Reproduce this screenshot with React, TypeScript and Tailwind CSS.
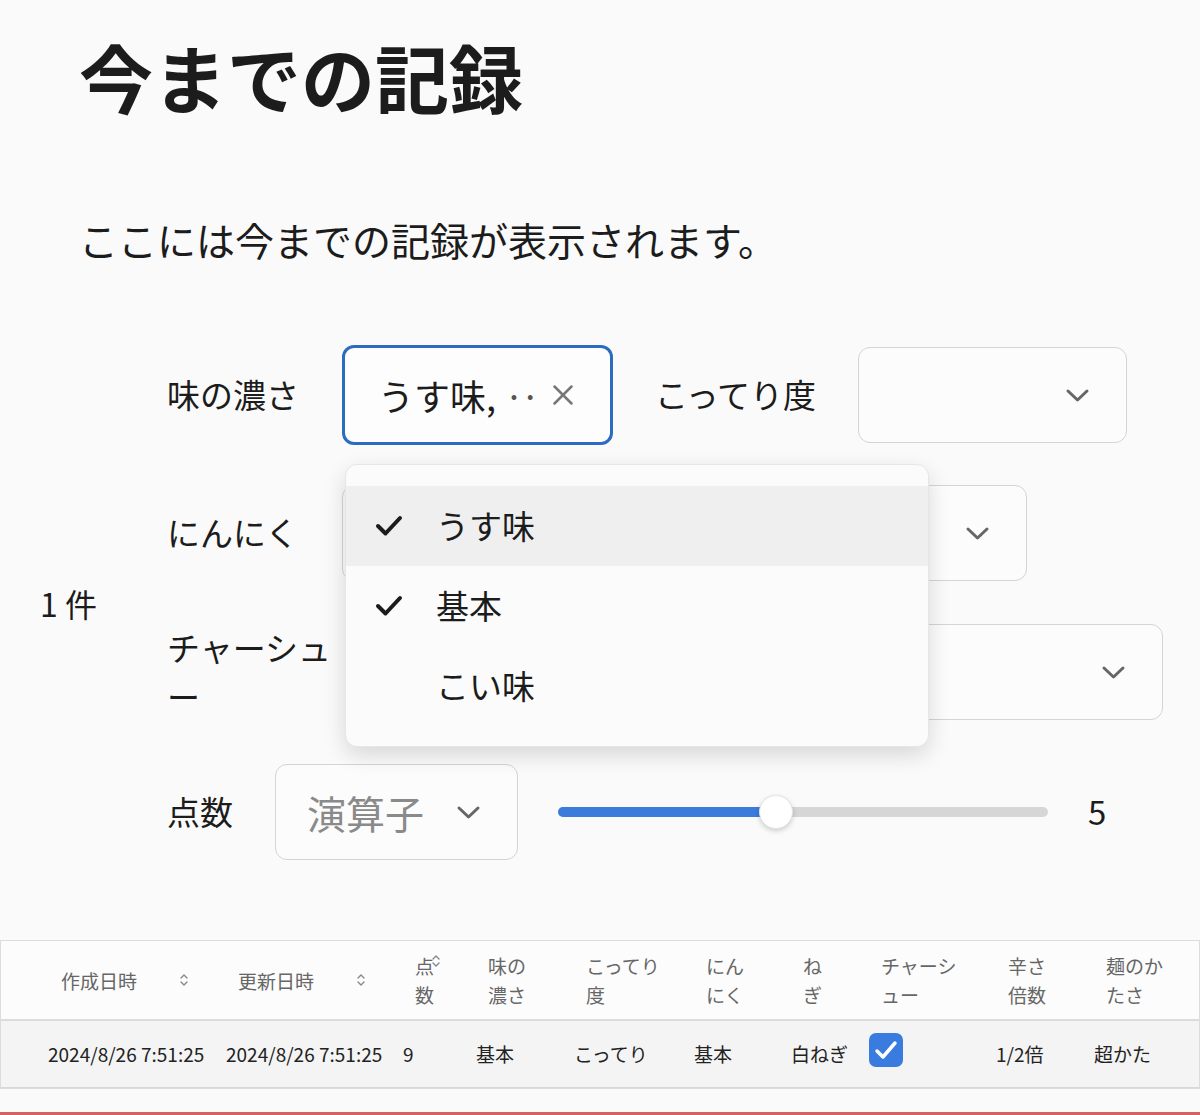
import { X } from 'lucide-react';

const Chevron = ({ className = '' }: { className?: string }) => (
  <svg width="25" height="15" viewBox="0 0 25 15" className={className}>
    <polyline points="3,3 12.5,12 22,3" fill="none" stroke="#666" strokeWidth="3" strokeLinecap="round" strokeLinejoin="round" />
  </svg>
);

const Check = () => (
  <svg width="28" height="22" viewBox="0 0 28 22">
    <polyline points="3,11 10.5,18.5 25,3" fill="none" stroke="#1c1c1c" strokeWidth="4" strokeLinecap="round" strokeLinejoin="round" />
  </svg>
);

const SortIcon = ({ className = '' }: { className?: string }) => (
  <svg width="10" height="14" viewBox="0 0 10 14" className={className}>
    <polyline points="2,5 5,2 8,5" fill="none" stroke="#888" strokeWidth="1.4" strokeLinecap="round" strokeLinejoin="round" />
    <polyline points="2,9 5,12 8,9" fill="none" stroke="#888" strokeWidth="1.4" strokeLinecap="round" strokeLinejoin="round" />
  </svg>
);

function SelectBox({ width }: { width: string }) {
  return (
    <div className={`${width} h-[96px] rounded-[12px] border border-[#d4d4d4] bg-[#fcfcfc] flex items-center justify-end pr-[36px]`}>
      <Chevron />
    </div>
  );
}

const options = [
  { label: 'うす味', checked: true, active: true },
  { label: '基本', checked: true, active: false },
  { label: 'こい味', checked: false, active: false },
];

const headers: { lines: string[]; sort?: 'side' | 'top' }[] = [
  { lines: ['作成日時'], sort: 'side' },
  { lines: ['更新日時'], sort: 'side' },
  { lines: ['点', '数'], sort: 'top' },
  { lines: ['味の', '濃さ'] },
  { lines: ['こってり', '度'] },
  { lines: ['にん', 'にく'] },
  { lines: ['ね', 'ぎ'] },
  { lines: ['チャーシ', 'ュー'] },
  { lines: ['辛さ', '倍数'] },
  { lines: ['麺のか', 'たさ'] },
];

const row = ['2024/8/26 7:51:25', '2024/8/26 7:51:25', '9', '基本', 'こってり', '基本', '白ねぎ', 'CHECK', '1/2倍', '超かた'];

const cols = 'grid grid-cols-[215px_177px_73px_98px_120px_97px_78px_127px_98px_117px]';

export default function App() {
  return (
    <div className="min-h-[1115px] bg-[#fafafa] font-['Noto_Sans_CJK_JP',sans-serif] text-[#1c1c1c] flex flex-col">
      <h1 className="pl-[79px] pt-[39px] text-[74px] leading-none font-bold">今までの記録</h1>
      <p className="pl-[79px] mt-[107px] text-[39px] leading-none">ここには今までの記録が表示されます。</p>

      <div className="flex items-center mt-[86px]">
        <div className="w-[167px] pl-[40px] text-[32px] leading-none">1 件</div>
        <div className="relative flex flex-col text-[33px]">
          <div className="flex items-center h-[100px]">
            <span className="w-[175px]">味の濃さ</span>
            <div className="w-[271px] h-[100px] rounded-[12px] border-[3px] border-[#2b6cc0] bg-[#fdfdfd] flex items-center pl-[33px] pr-[30px]">
              <span className="text-[36px] whitespace-nowrap">うす味, <span className="text-[#555] tracking-[-4px]">··</span></span>
              <X className="ml-auto text-[#777]" size={34} strokeWidth={1.8} />
            </div>
            <span className="ml-[42px] w-[203px]">こってり度</span>
            <SelectBox width="w-[269px]" />
          </div>

          <div className="flex items-center mt-[40px]">
            <span className="w-[175px]">にんにく</span>
            <SelectBox width="w-[685px]" />
          </div>

          <div className="flex items-center mt-[42px]">
            <span className="w-[208px] leading-[49px]">チャーシュ<br />ー</span>
            <SelectBox width="w-[788px]" />
          </div>

          <div className="flex items-center mt-[43px]">
            <span className="w-[108px]">点数</span>
            <div className="w-[243px] h-[96px] rounded-[12px] border border-[#d4d4d4] bg-[#fcfcfc] flex items-center pl-[31px] pr-[36px]">
              <span className="text-[39px] text-[#8a8a8a]">演算子</span>
              <Chevron className="ml-auto" />
            </div>
            <div className="relative ml-[40px] w-[490px] h-[10px] rounded-full bg-[#d6d6d6]">
              <div className="h-full w-[218px] rounded-full bg-[#3a7bdc]" />
              <div className="absolute left-[201px] top-[-12px] w-[34px] h-[34px] rounded-full bg-white border border-[#e4e4e4] shadow-[0_2px_5px_rgba(0,0,0,0.18)]" />
            </div>
            <span className="ml-[40px] text-[33px]">5</span>
          </div>

          <div className="absolute left-[178px] top-[119px] w-[584px] h-[283px] rounded-[12px] bg-[#fbfbfb] border border-[#e6e6e6] shadow-[0_8px_22px_rgba(0,0,0,0.14)] py-[21px]">
            {options.map((o) => (
              <div key={o.label} className={`h-[80px] flex items-center ${o.active ? 'bg-[#efefef]' : ''}`}>
                <span className="w-[90px] pl-[29px] flex items-center">{o.checked && <Check />}</span>
                <span className="text-[33px]">{o.label}</span>
              </div>
            ))}
          </div>
        </div>
      </div>

      <div className="mt-[80px] border border-[#dcdcdc]">
        <div className={`${cols} h-[80px] bg-[#fcfcfc] border-b-2 border-[#dcdcdc] text-[19px] text-[#666] leading-[29px]`}>
          {headers.map((h, i) => (
            <div key={i} className={`flex items-center ${i === 0 ? 'pl-[60px]' : 'pl-[22px]'}`}>
              <span>
                {h.lines.map((l, j) => (
                  <span key={j} className="block">{l}</span>
                ))}
              </span>
              {h.sort === 'side' && <SortIcon className="ml-[42px]" />}
              {h.sort === 'top' && <SortIcon className="self-start mt-[13px] ml-[-3px]" />}
            </div>
          ))}
        </div>
        <div className={`${cols} h-[67px] bg-[#f4f4f4] border-b border-[#d8d8d8] text-[19px] text-[#222]`}>
          {row.map((v, i) => (
            <div key={i} className={`flex items-center ${i === 0 ? 'pl-[47px]' : 'pl-[10px]'}`}>
              {v === 'CHECK' ? (
                <div className="w-[34px] h-[34px] rounded-[7px] bg-[#3a7be0] flex items-center justify-center mb-[8px]">
                  <svg width="26" height="22" viewBox="0 0 26 22">
                    <polyline points="4,12 10,18 22,4" fill="none" stroke="#fff" strokeWidth="3.5" strokeLinecap="round" strokeLinejoin="round" />
                  </svg>
                </div>
              ) : (
                <span className="whitespace-nowrap">{v}</span>
              )}
            </div>
          ))}
        </div>
      </div>

      <div className="mt-auto h-[3px] bg-[#d4625f]" />
    </div>
  );
}
